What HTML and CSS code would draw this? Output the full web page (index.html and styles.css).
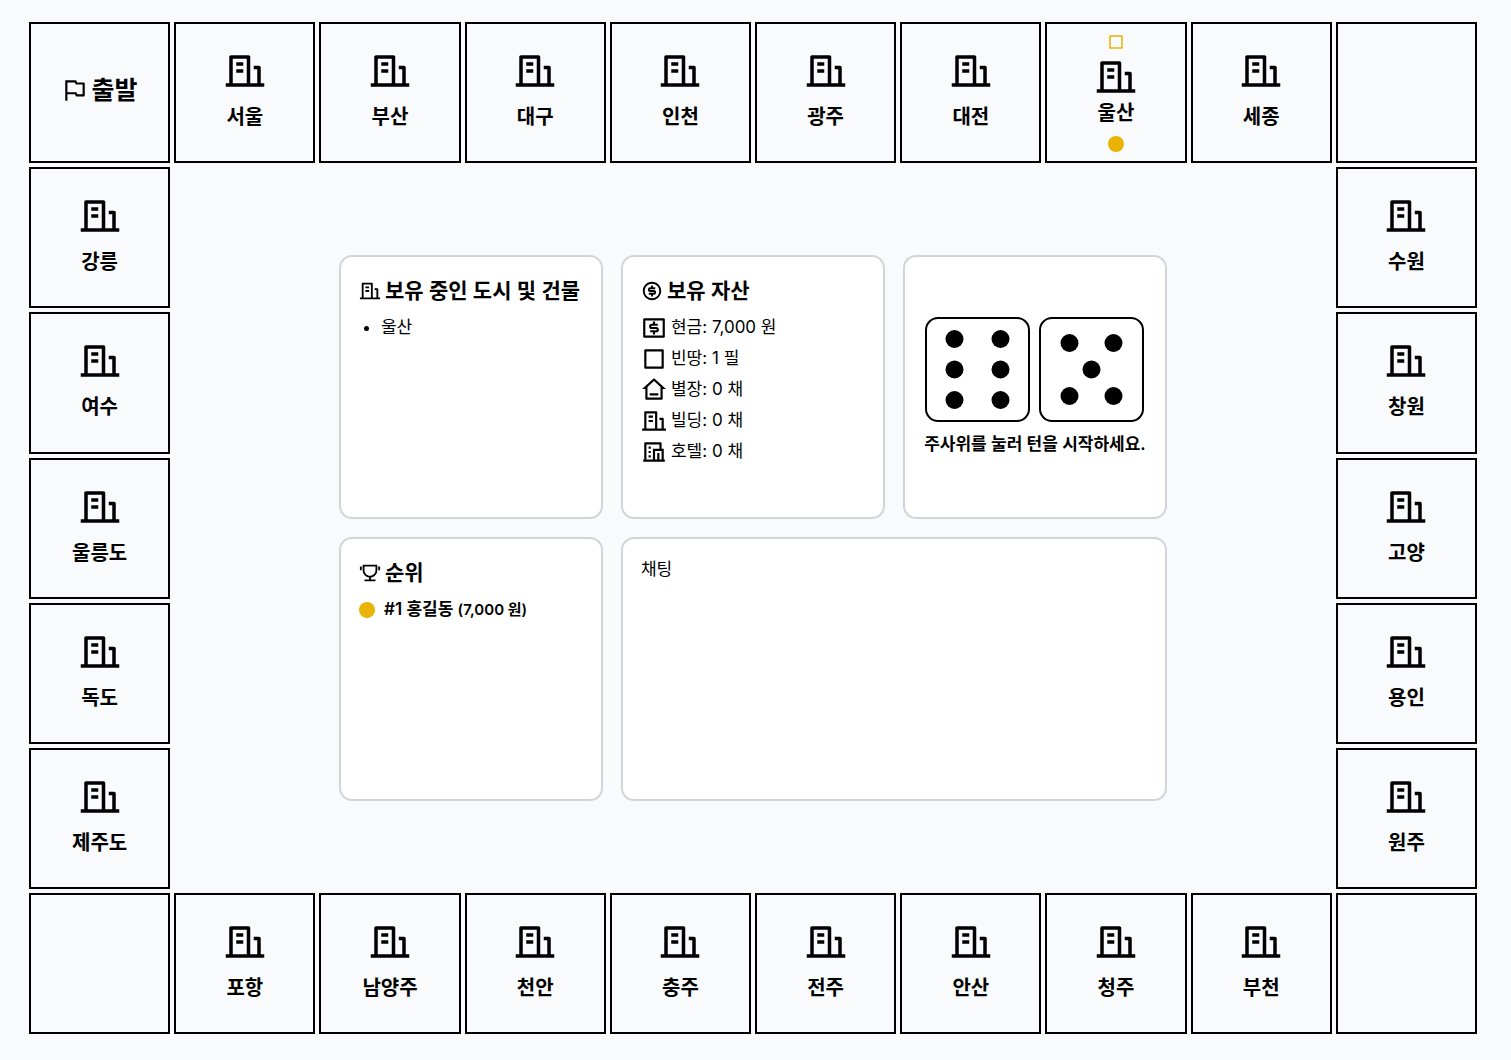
FILE: index.html
```html
<!DOCTYPE html>
<html lang="ko">
<head>
    <meta charset="UTF-8">
    <meta name="viewport" content="width=device-width, initial-scale=1.0">
    <title>부루마블</title>
    <link rel="stylesheet" href="styles.css">
</head>
<body>
    <svg class="sprite" aria-hidden="true">
        <symbol id="building" viewBox="0 0 24 24"><path d="M21 19H23V21H1V19H3V4C3 3.44772 3.44772 3 4 3H14C14.5523 3 15 3.44772 15 4V19H19V11H17V9H20C20.5523 9 21 9.44772 21 10V19ZM5 5V19H13V5H5ZM7 11H11V13H7V11ZM7 7H11V9H7V7Z"/></symbol>
        <symbol id="flag" viewBox="0 0 24 24"><path d="M12.382 3C12.7607 3 13.107 3.214 13.2764 3.55279L14 5H20C20.5523 5 21 5.44772 21 6V17C21 17.5523 20.5523 18 20 18H13.618C13.2393 18 12.893 17.786 12.7236 17.4472L12 16H5V22H3V3H12.382ZM11.7639 5H5V14H13.2361L14.2361 16H19V7H12.7639L11.7639 5Z"/></symbol>
        <symbol id="coin" viewBox="0 0 24 24"><path d="M12 22C6.477 22 2 17.523 2 12S6.477 2 12 2s10 4.477 10 10-4.477 10-10 10zm0-2a8 8 0 1 0 0-16 8 8 0 0 0 0 16zm-3.5-6H14a.5.5 0 1 0 0-1h-4a2.5 2.5 0 1 1 0-5h1V6h2v2h2.5v2H10a.5.5 0 1 0 0 1h4a2.5 2.5 0 1 1 0 5h-1v2h-2v-2H8.5v-2z"/></symbol>
        <symbol id="cash" viewBox="0 0 24 24"><path d="M3 3h18a1 1 0 0 1 1 1v16a1 1 0 0 1-1 1H3a1 1 0 0 1-1-1V4a1 1 0 0 1 1-1zm1 2v14h16V5H4zm4.5 9H14a.5.5 0 1 0 0-1h-4a2.5 2.5 0 1 1 0-5h1V6h2v2h2.5v2H10a.5.5 0 1 0 0 1h4a2.5 2.5 0 1 1 0 5h-1v2h-2v-2H8.5v-2z"/></symbol>
        <symbol id="land" viewBox="0 0 24 24"><path d="M4 3h16a1 1 0 0 1 1 1v16a1 1 0 0 1-1 1H4a1 1 0 0 1-1-1V4a1 1 0 0 1 1-1zm1 2v14h14V5H5z"/></symbol>
        <symbol id="house" viewBox="0 0 24 24"><path d="M19 21H5a1 1 0 0 1-1-1v-9H1l10.327-9.388a1 1 0 0 1 1.346 0L23 11h-3v9a1 1 0 0 1-1 1zM6 19h12V9.157l-6-5.454-6 5.454V19zm2-4h8v2H8v-2z"/></symbol>
        <symbol id="hotel" viewBox="0 0 24 24"><path d="M22 21H2v-2h1V4a1 1 0 0 1 1-1h14a1 1 0 0 1 1 1v5h2v10h1v2zm-5-2h2v-8h-6v8h2v-6h2v6zm0-10V5H5v14h6V9h6zM7 11h2v2H7v-2zm0 4h2v2H7v-2zm0-8h2v2H7V7z"/></symbol>
        <symbol id="trophy" viewBox="0 0 24 24"><path d="M13 16.94V19H18V21H6V19H11V16.94C7.06 16.45 4 13.08 4 9V3H20V9C20 13.08 16.95 16.45 13 16.94ZM6 5V9C6 12.31 8.69 15 12 15C15.31 15 18 12.31 18 9V5H6ZM1 5H3V9H1V5ZM21 5H23V9H21V5Z"/></symbol>
    </svg>

    <main class="board">
        <div class="cell start"><svg><use href="#flag"/></svg>출발</div>
        <div class="cell"><svg><use href="#building"/></svg><span>서울</span></div>
        <div class="cell"><svg><use href="#building"/></svg><span>부산</span></div>
        <div class="cell"><svg><use href="#building"/></svg><span>대구</span></div>
        <div class="cell"><svg><use href="#building"/></svg><span>인천</span></div>
        <div class="cell"><svg><use href="#building"/></svg><span>광주</span></div>
        <div class="cell"><svg><use href="#building"/></svg><span>대전</span></div>
        <div class="cell owned">
            <svg class="mark"><use href="#land"/></svg>
            <svg><use href="#building"/></svg>
            <span>울산</span>
            <i class="player"></i>
        </div>
        <div class="cell"><svg><use href="#building"/></svg><span>세종</span></div>
        <div class="cell"></div>

        <div class="cell"><svg><use href="#building"/></svg><span>강릉</span></div>

        <div class="center">
            <section class="panel">
                <h2><svg><use href="#building"/></svg>보유 중인 도시 및 건물</h2>
                <ul class="cities">
                    <li>울산</li>
                </ul>
            </section>

            <section class="panel">
                <h2><svg><use href="#coin"/></svg>보유 자산</h2>
                <ul class="assets">
                    <li><svg><use href="#cash"/></svg>현금: 7,000 원</li>
                    <li><svg><use href="#land"/></svg>빈땅: 1 필</li>
                    <li><svg><use href="#house"/></svg>별장: 0 채</li>
                    <li><svg><use href="#building"/></svg>빌딩: 0 채</li>
                    <li><svg><use href="#hotel"/></svg>호텔: 0 채</li>
                </ul>
            </section>

            <section class="panel dice-panel">
                <button type="button" class="dice" aria-label="주사위 굴리기">
                    <svg class="die" viewBox="0 0 101 101">
                        <circle cx="27.5" cy="20" r="9"/><circle cx="73.5" cy="20" r="9"/>
                        <circle cx="27.5" cy="50.5" r="9"/><circle cx="73.5" cy="50.5" r="9"/>
                        <circle cx="27.5" cy="81" r="9"/><circle cx="73.5" cy="81" r="9"/>
                    </svg>
                    <svg class="die" viewBox="0 0 101 101">
                        <circle cx="28.5" cy="24" r="9"/><circle cx="72.5" cy="24" r="9"/>
                        <circle cx="50.5" cy="50.5" r="9"/>
                        <circle cx="28.5" cy="77" r="9"/><circle cx="72.5" cy="77" r="9"/>
                    </svg>
                </button>
                <p>주사위를 눌러 턴을 시작하세요.</p>
            </section>

            <section class="panel">
                <h2><svg><use href="#trophy"/></svg>순위</h2>
                <div class="rank"><i class="player"></i><span>#1 홍길동 <small>(7,000 원)</small></span></div>
            </section>

            <section class="panel chat">채팅</section>
        </div>

        <div class="cell"><svg><use href="#building"/></svg><span>수원</span></div>
        <div class="cell"><svg><use href="#building"/></svg><span>여수</span></div>
        <div class="cell"><svg><use href="#building"/></svg><span>창원</span></div>
        <div class="cell"><svg><use href="#building"/></svg><span>울릉도</span></div>
        <div class="cell"><svg><use href="#building"/></svg><span>고양</span></div>
        <div class="cell"><svg><use href="#building"/></svg><span>독도</span></div>
        <div class="cell"><svg><use href="#building"/></svg><span>용인</span></div>
        <div class="cell"><svg><use href="#building"/></svg><span>제주도</span></div>
        <div class="cell"><svg><use href="#building"/></svg><span>원주</span></div>

        <div class="cell"></div>
        <div class="cell"><svg><use href="#building"/></svg><span>포항</span></div>
        <div class="cell"><svg><use href="#building"/></svg><span>남양주</span></div>
        <div class="cell"><svg><use href="#building"/></svg><span>천안</span></div>
        <div class="cell"><svg><use href="#building"/></svg><span>충주</span></div>
        <div class="cell"><svg><use href="#building"/></svg><span>전주</span></div>
        <div class="cell"><svg><use href="#building"/></svg><span>안산</span></div>
        <div class="cell"><svg><use href="#building"/></svg><span>청주</span></div>
        <div class="cell"><svg><use href="#building"/></svg><span>부천</span></div>
        <div class="cell"></div>
    </main>
</body>
</html>
```
FILE: styles.css
```css
* {
    box-sizing: border-box;
}
body {
    margin: 0;
    background-color: #f9fafc;
    color: #000;
    font-family: Inter, "Noto Sans CJK KR", sans-serif;
    font-size: 17px;
    line-height: 24px;
}
h2, p, ul {
    margin: 0;
    padding: 0;
}
svg {
    fill: currentColor;
    flex-shrink: 0;
}
.sprite {
    display: none;
}
.board {
    display: grid;
    grid-template-columns: repeat(10, 1fr);
    gap: 4px;
    padding: 22px 34px 22px 29px;
}
.cell {
    aspect-ratio: 1;
    min-width: 0;
    border: 2px solid #000;
    display: flex;
    flex-direction: column;
    align-items: center;
    justify-content: center;
    gap: 10px;
    padding-bottom: 2px;
    font-size: 20px;
    font-weight: 600;
    line-height: 31px;
}
.cell svg {
    width: 42px;
    height: 42px;
}
.start {
    flex-direction: row;
    gap: 4px;
    padding-bottom: 5px;
    font-size: 25px;
}
.start svg {
    width: 26px;
    height: 26px;
}
.owned {
    gap: 0;
    padding-bottom: 0;
}
.owned .mark {
    width: 18px;
    height: 18px;
    margin-bottom: 5px;
    color: #eab308;
}
.player {
    width: 16px;
    height: 16px;
    border-radius: 50%;
    background-color: #eab308;
}
.owned .player {
    margin-top: 7px;
}
.center {
    grid-area: 2 / 2 / 7 / 10;
    place-self: center;
    width: 100%;
    max-width: 828px;
    display: grid;
    grid-template-columns: repeat(3, 1fr);
    gap: 18px;
}
.panel {
    min-height: 264px;
    padding: 18px;
    border: 2px solid #d1d5db;
    border-radius: 13px;
    background-color: #fff;
}
.panel h2 {
    display: flex;
    align-items: center;
    gap: 4px;
    margin-bottom: 6px;
    font-size: 21px;
    font-weight: 600;
    line-height: 31px;
    white-space: nowrap;
}
.panel h2 svg {
    width: 22px;
    height: 22px;
}
.cities {
    padding-left: 22px;
    line-height: 31px;
}
.assets {
    list-style: none;
    line-height: 31px;
}
.assets li {
    display: flex;
    align-items: center;
    gap: 4px;
}
.assets svg {
    width: 26px;
    height: 26px;
}
.dice-panel {
    display: flex;
    flex-direction: column;
    align-items: center;
    justify-content: center;
    gap: 9px;
    font-weight: 600;
    line-height: 26px;
}
.dice {
    display: flex;
    gap: 9px;
    padding: 0;
    border: none;
    background: none;
    color: #000;
    cursor: pointer;
}
.die {
    width: 105px;
    height: 105px;
    border: 2px solid #000;
    border-radius: 13px;
}
.rank {
    display: flex;
    align-items: center;
    gap: 9px;
    font-weight: 600;
    line-height: 31px;
}
.rank small {
    font-size: 15px;
}
.chat {
    grid-column: span 2;
}
```
